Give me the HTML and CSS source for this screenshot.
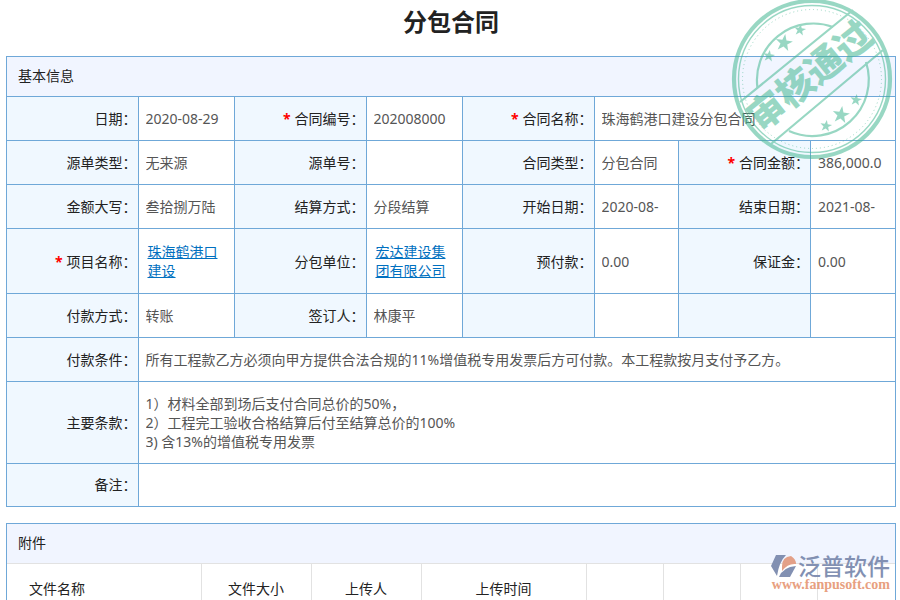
FILE: index.html
```html
<!DOCTYPE html>
<html lang="zh-CN">
<head>
    <meta charset="UTF-8">
    <meta name="viewport" content="width=device-width, initial-scale=1.0">
    <title>分包合同</title>
    <link rel="stylesheet" href="styles.css">
</head>
<body>
    <h1 class="page-title">分包合同</h1>

    <section class="panel">
        <h2 class="panel-title">基本信息</h2>
        <table class="form-table">
            <colgroup>
                <col class="col-first"><col class="col-value">
                <col class="col-label"><col class="col-value">
                <col class="col-label"><col>
                <col class="col-label"><col>
            </colgroup>
            <tr>
                <th><label for="date">日期：</label></th>
                <td><input id="date" type="text" value="2020-08-29" readonly></td>
                <th class="required"><label for="code">合同编号：</label></th>
                <td><input id="code" type="text" value="202008000" readonly></td>
                <th class="required"><label for="name">合同名称：</label></th>
                <td colspan="3"><input id="name" type="text" value="珠海鹤港口建设分包合同" readonly></td>
            </tr>
            <tr>
                <th><label for="source-type">源单类型：</label></th>
                <td><input id="source-type" type="text" value="无来源" readonly></td>
                <th><label for="source-no">源单号：</label></th>
                <td><input id="source-no" type="text" value="" readonly></td>
                <th><label for="type">合同类型：</label></th>
                <td><input id="type" type="text" value="分包合同" readonly></td>
                <th class="required"><label for="amount">合同金额：</label></th>
                <td><input id="amount" type="text" value="386,000.0" readonly></td>
            </tr>
            <tr>
                <th><label for="amount-cn">金额大写：</label></th>
                <td><input id="amount-cn" type="text" value="叁拾捌万陆" readonly></td>
                <th><label for="settle">结算方式：</label></th>
                <td><input id="settle" type="text" value="分段结算" readonly></td>
                <th><label for="start">开始日期：</label></th>
                <td><input id="start" type="text" value="2020-08-" readonly></td>
                <th><label for="end">结束日期：</label></th>
                <td><input id="end" type="text" value="2021-08-" readonly></td>
            </tr>
            <tr class="row-tall">
                <th class="required">项目名称：</th>
                <td><a href="#">珠海鹤港口建设</a></td>
                <th>分包单位：</th>
                <td><a href="#">宏达建设集团有限公司</a></td>
                <th><label for="prepaid">预付款：</label></th>
                <td><input id="prepaid" type="text" value="0.00" readonly></td>
                <th><label for="deposit">保证金：</label></th>
                <td><input id="deposit" type="text" value="0.00" readonly></td>
            </tr>
            <tr>
                <th><label for="pay-type">付款方式：</label></th>
                <td><input id="pay-type" type="text" value="转账" readonly></td>
                <th><label for="signer">签订人：</label></th>
                <td><input id="signer" type="text" value="林康平" readonly></td>
                <th></th>
                <td></td>
                <th></th>
                <td></td>
            </tr>
            <tr>
                <th><label for="pay-terms">付款条件：</label></th>
                <td colspan="7"><input id="pay-terms" type="text" value="所有工程款乙方必须向甲方提供合法合规的11%增值税专用发票后方可付款。本工程款按月支付予乙方。" readonly></td>
            </tr>
            <tr class="row-terms">
                <th><label for="terms">主要条款：</label></th>
                <td colspan="7"><textarea id="terms" rows="3" readonly>1）材料全部到场后支付合同总价的50%，
2）工程完工验收合格结算后付至结算总价的100%
3) 含13%的增值税专用发票</textarea></td>
            </tr>
            <tr class="row-remark">
                <th><label for="remark">备注：</label></th>
                <td colspan="7"><input id="remark" type="text" value="" readonly></td>
            </tr>
        </table>
    </section>

    <section class="panel">
        <h2 class="panel-title">附件</h2>
        <table class="file-table">
            <colgroup>
                <col class="col-file">
                <col class="col-size">
                <col class="col-size">
                <col class="col-time">
                <col><col><col><col>
            </colgroup>
            <tr>
                <th>文件名称</th>
                <th>文件大小</th>
                <th>上传人</th>
                <th>上传时间</th>
                <th></th>
                <th></th>
                <th></th>
                <th></th>
            </tr>
        </table>
    </section>

    <!-- approval stamp -->
    <svg class="stamp" viewBox="0 0 180 180" role="img" aria-label="审核通过">
        <defs>
            <path id="star" d="M0 -9 L2.1 -2.9 L8.6 -2.8 L3.4 1.1 L5.3 7.3 L0 3.6 L-5.3 7.3 L-3.4 1.1 L-8.6 -2.8 L-2.1 -2.9 Z"/>
        </defs>
        <g fill="none" stroke="#45b893">
            <circle cx="92" cy="79" r="78" stroke-width="4.2"/>
            <circle cx="92" cy="79" r="73.5" stroke-width="1.4"/>
            <circle cx="92" cy="79" r="69.5" stroke-width="1" stroke-dasharray="1 3"/>
            <path d="M37.5 88 A56.500 56.500 0 0 1 113 27" stroke-width="2.2"/>
            <path d="M146 62 A56.500 56.500 0 0 1 69 131" stroke-width="2.2"/>
            <path d="M20 102 L133 10 M51 144 L163 50" stroke-width="2.2"/>
        </g>
        <g fill="#45b893">
            <use href="#star" transform="translate(64 43) rotate(8)"/>
            <use href="#star" transform="translate(80 30) rotate(8) scale(.68)"/>
            <use href="#star" transform="translate(49 56) rotate(8) scale(.68)"/>
            <use href="#star" transform="translate(121 115) rotate(8)"/>
            <use href="#star" transform="translate(136 100) rotate(8) scale(.68)"/>
            <use href="#star" transform="translate(106 126) rotate(8) scale(.68)"/>
            <text class="stamp-text" transform="translate(90 76) rotate(-39)" text-anchor="middle" y="13">审核通过</text>
        </g>
    </svg>

    <div class="watermark">
        <div class="brand">
            <svg class="brand-logo" viewBox="0 0 26 24" aria-hidden="true">
                <path fill="#8290b2" d="M5 1 H15 Q8 8 6 22 L0 12 Z"/>
                <path fill="#e3a088" d="M11 12 Q11 3 20 2 Q25 5 25 10 Q17 9 11 17 Z"/>
                <path fill="#8290b2" d="M8 23 Q12 13 25 12 L19 23 Z"/>
            </svg>
            <span>泛普软件</span>
        </div>
        <div class="site">www.fanpusoft.com</div>
    </div>
</body>
</html>
```
FILE: styles.css
```css
* {
    margin: 0;
    padding: 0;
    box-sizing: border-box;
}

body {
    position: relative;
    height: 100vh;
    padding: 0 4px 0 6px;
    overflow: hidden;
    background: #fff;
    color: #222;
    font-family: "Noto Sans", "Noto Sans CJK SC", sans-serif;
    font-size: 14px;
    line-height: 19px;
}

.page-title {
    padding: 5px 0 17px;
    font-size: 24px;
    line-height: 34px;
    text-align: center;
}

.panel {
    margin-bottom: 16px;
    border: 1px solid #6fa8d8;
}

.panel-title {
    height: 39px;
    padding: 0 11px;
    background: #f1f5ff;
    font-size: 14px;
    font-weight: normal;
    line-height: 37px;
}

table {
    width: 100%;
    border-collapse: collapse;
    table-layout: fixed;
}

th {
    font-weight: normal;
}

.form-table th,
.form-table td {
    height: 44px;
    border: 1px solid #6fa8d8;
}

.form-table th {
    padding-right: 1px;
    background: #f0f8ff;
    text-align: right;
}

.form-table td {
    padding: 0 7px;
    color: #555;
}

.form-table tr > :first-child {
    border-left: none;
}

.form-table tr > :last-child {
    border-right: none;
}

.form-table tr:last-child > * {
    border-bottom: none;
}

.col-first {
    width: 131px;
}

.col-label {
    width: 132px;
}

.col-value {
    width: 96px;
}

.required::before {
    content: "*";
    color: #f00;
    font-weight: bold;
    margin-right: 4px;
}

.form-table .row-tall > * {
    height: 65px;
}

.form-table .row-terms > * {
    height: 82px;
}

.form-table .row-remark > * {
    height: 42px;
}

input,
textarea {
    display: block;
    width: 100%;
    border: none;
    outline: none;
    background: none;
    color: inherit;
    font: inherit;
    resize: none;
    overflow: hidden;
}

a {
    display: block;
    padding-left: 2px;
    color: #0070c0;
}

.file-table th {
    height: 50px;
    border: 1px solid #e2e2e2;
}

.file-table th:first-child {
    padding-left: 22px;
    border-left: none;
    text-align: left;
}

.file-table th:last-child {
    border-right: none;
}

.col-file {
    width: 194px;
}

.col-size {
    width: 110px;
}

.col-time {
    width: 165px;
}

.stamp {
    position: absolute;
    top: 0;
    right: 0;
    width: 180px;
    height: 180px;
    opacity: 0.55;
    pointer-events: none;
}

.stamp-text {
    font-size: 37px;
    font-weight: 900;
}

.watermark {
    position: absolute;
    right: 10px;
    bottom: 8px;
}

.brand {
    display: flex;
    align-items: center;
    justify-content: flex-end;
    gap: 1px;
    color: #8290b2;
    font-size: 23px;
    font-weight: 500;
    line-height: 24px;
}

.brand-logo {
    width: 26px;
    height: 24px;
}

.site {
    color: #e8a080;
    font-family: "Liberation Serif", serif;
    font-size: 14px;
    font-weight: bold;
    line-height: 14px;
    text-align: right;
}
```
